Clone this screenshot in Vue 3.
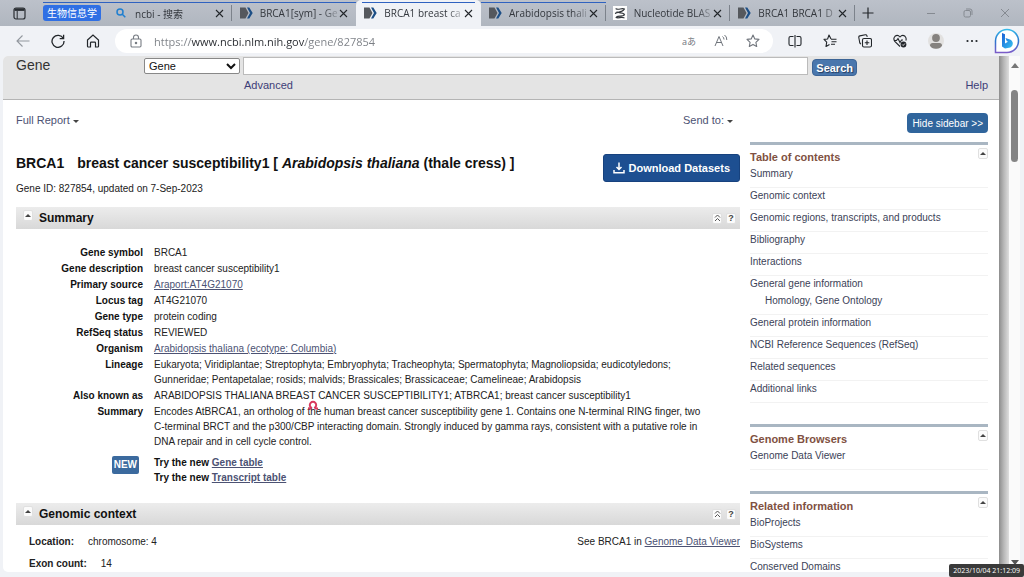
<script setup>
import { ref } from 'vue'

const address = ref('https://www.ncbi.nlm.nih.gov/gene/827854')

const tabs = [
  { title: 'ncbi - 搜索', icon: 'search', grouped: true, divider: true },
  { title: 'BRCA1[sym] - Ge', icon: 'ncbi', grouped: true, rounded: 'right' },
  { title: 'BRCA1 breast ca', icon: 'ncbi', grouped: true, active: true },
  { title: 'Arabidopsis thali', icon: 'ncbi', grouped: true, rounded: 'left', divider: true },
  { title: 'Nucleotide BLAS', icon: 'blast', divider: true },
  { title: 'BRCA1 BRCA1 D', icon: 'ncbi', divider: true },
]

const facts = [
  { term: 'Gene symbol', lines: ['BRCA1'] },
  { term: 'Gene description', lines: ['breast cancer susceptibility1'] },
  { term: 'Primary source', lines: ['Araport:AT4G21070'], link: true },
  { term: 'Locus tag', lines: ['AT4G21070'] },
  { term: 'Gene type', lines: ['protein coding'] },
  { term: 'RefSeq status', lines: ['REVIEWED'] },
  { term: 'Organism', lines: ['Arabidopsis thaliana (ecotype: Columbia)'], link: true },
  {
    term: 'Lineage',
    lines: [
      'Eukaryota; Viridiplantae; Streptophyta; Embryophyta; Tracheophyta; Spermatophyta; Magnoliopsida; eudicotyledons;',
      'Gunneridae; Pentapetalae; rosids; malvids; Brassicales; Brassicaceae; Camelineae; Arabidopsis',
    ],
  },
  { term: 'Also known as', lines: ['ARABIDOPSIS THALIANA BREAST CANCER SUSCEPTIBILITY1; ATBRCA1; breast cancer susceptibility1'] },
  {
    term: 'Summary',
    lines: [
      'Encodes AtBRCA1, an ortholog of the human breast cancer susceptibility gene 1. Contains one N-terminal RING finger, two',
      'C-terminal BRCT and the p300/CBP interacting domain. Strongly induced by gamma rays, consistent with a putative role in',
      'DNA repair and in cell cycle control.',
    ],
  },
]

const contents = [
  { label: 'Summary' },
  { label: 'Genomic context' },
  { label: 'Genomic regions, transcripts, and products' },
  { label: 'Bibliography' },
  { label: 'Interactions' },
  { label: 'General gene information', children: ['Homology', 'Gene Ontology'] },
  { label: 'General protein information' },
  { label: 'NCBI Reference Sequences (RefSeq)' },
  { label: 'Related sequences' },
  { label: 'Additional links' },
]

const portlets = [
  { title: 'Table of contents', items: contents },
  { title: 'Genome Browsers', items: [{ label: 'Genome Data Viewer' }] },
  { title: 'Related information', items: [{ label: 'BioProjects' }, { label: 'BioSystems' }, { label: 'Conserved Domains' }] },
]
</script>

<template>
  <div class="window">
    <header class="tabstrip">
      <button class="chrome-btn workspace" aria-label="Tab actions">
        <svg width="13" height="13" viewBox="0 0 13 13" fill="none" stroke="#2a2e33">
          <rect x="1" y="1" width="11" height="11" rx="2" stroke-width="1.2" />
          <path d="M1.5 2.6h10" stroke-width="2.6" />
          <path d="M4.2 4v8" stroke-width="1" />
        </svg>
      </button>
      <div class="group"><button class="group-chip">生物信息学</button></div>
      <nav class="tabs" aria-label="Tabs">
        <div
          v-for="tab in tabs"
          :key="tab.title"
          class="tab"
          :class="[tab.rounded, { grouped: tab.grouped, active: tab.active, divider: tab.divider }]"
        >
          <svg v-if="tab.icon === 'search'" class="favicon" width="14" height="14" viewBox="0 0 14 14" fill="none" stroke="#1f7fd0" stroke-width="1.5">
            <circle cx="6" cy="6" r="3" />
            <path d="M8.3 8.3l3 3" />
          </svg>
          <svg v-else-if="tab.icon === 'ncbi'" class="favicon" width="14" height="14" viewBox="0 0 14 14">
            <path d="M1 1.500h5.500l3 5.500l-3 5.500h-5.500z" fill="#55585d" />
            <path d="M8 1.500h2.300l3.400 5.500l-3.400 5.500h-2.300l3-5.500z" fill="#1d4f86" />
          </svg>
          <svg v-else class="favicon" width="14" height="14" viewBox="0 0 14 14" fill="none" stroke="#33373c" stroke-width="1.200" stroke-linecap="round">
            <rect width="14" height="14" fill="#fdfdfd" stroke="none" />
            <path d="M3 2.800c2.500 1.500 5.500-1 8.500 .2M11 3.500c-1.500 3-6.500 2.200-8.500 3.800M4 6c2.500 1.500 5 0 7 2M11.500 8.800c-2 2.200-6 .4-8 2.200M3 11.500c2.500 1 5-.8 8 .3" />
          </svg>
          <span class="tab-title">{{ tab.title }}</span>
          <button class="chrome-btn close" :aria-label="'Close ' + tab.title">
            <svg width="9" height="9" viewBox="0 0 9 9" stroke="#22262a" stroke-width="1.100"><path d="M1 1l7 7M8 1l-7 7" /></svg>
          </button>
        </div>
      </nav>
      <button class="chrome-btn plus" aria-label="New tab">
        <svg width="12" height="12" viewBox="0 0 12 12" stroke="#22262a" stroke-width="1.200"><path d="M6 .5v11M.5 6h11" /></svg>
      </button>
      <div class="window-controls">
        <button class="chrome-btn" aria-label="Minimize">
          <svg width="10" height="10" viewBox="0 0 10 10" stroke="#858a91"><path d="M1 5.500h8" /></svg>
        </button>
        <button class="chrome-btn" aria-label="Restore">
          <svg width="10" height="10" viewBox="0 0 10 10" fill="none" stroke="#858a91">
            <rect x="1" y="2.500" width="6.500" height="6.500" rx="1.500" /><path d="M3 1h4q2 0 2 2v4" />
          </svg>
        </button>
        <button class="chrome-btn" aria-label="Close window">
          <svg width="10" height="10" viewBox="0 0 10 10" stroke="#858a91"><path d="M1 1l8 8M9 1l-8 8" /></svg>
        </button>
      </div>
    </header>

    <div class="toolbar">
      <button class="chrome-btn tool" aria-label="Back">
        <svg width="14" height="14" viewBox="0 0 14 14" fill="none" stroke="#92979e" stroke-width="1.100"><path d="M13.500 7h-12.500M6.500 1.500L1 7l5.500 5.500" /></svg>
      </button>
      <button class="chrome-btn tool" aria-label="Refresh">
        <svg width="14" height="14" viewBox="0 0 14 14" fill="none" stroke="#22262a" stroke-width="1.300"><path d="M12.300 4.500A6 6 0 1 0 13 7M12.600 .8v3.900h-3.900" /></svg>
      </button>
      <button class="chrome-btn tool" aria-label="Home">
        <svg width="14" height="14" viewBox="0 0 14 14" fill="none" stroke="#22262a" stroke-width="1.200"><path d="M1.500 6L7 1l5.500 5v6.200q0 .8-.8.800h-2.200v-4q0-.8-.8-.8h-3.400q-.8 0-.8.800v4h-2.200q-.8 0-.8-.8z" /></svg>
      </button>
      <div class="address">
        <svg width="12" height="14" viewBox="0 0 12 14" fill="none" stroke="#777c83" stroke-width="1.100">
          <rect x="1" y="5" width="10" height="8" rx="1.200" /><path d="M3.500 5v-1.500a2.500 2.500 0 0 1 5 0v1.500" /><circle cx="6" cy="9" r=".7" fill="#777c83" />
        </svg>
        <input v-model="address" class="url" type="text" aria-label="Address" />
        <button class="chrome-btn translate" aria-label="Translate">aあ</button>
        <button class="chrome-btn" aria-label="Read aloud">
          <svg width="14" height="14" viewBox="0 0 14 14" fill="none" stroke="#70757c" stroke-width="1">
            <path d="M1 12L5 2.500l4 9.500M2.500 8.500h5M8.500 2.500q1.500 1 1.500 3M10.500 1q2.500 1.600 2.300 5" />
          </svg>
        </button>
        <button class="chrome-btn" aria-label="Add to favorites">
          <svg width="14" height="14" viewBox="0 0 14 14" fill="none" stroke="#70757c" stroke-width="1.100" stroke-linejoin="round"><path d="M7 1l1.800 3.900 4.200.5-3.100 2.900.8 4.200L7 10.400l-3.700 2.100.8-4.200L1 5.400l4.200-.5z" /></svg>
        </button>
      </div>
      <div class="tools">
        <button class="chrome-btn" aria-label="Split screen">
          <svg width="14" height="14" viewBox="0 0 14 14" fill="none" stroke="#22262a" stroke-width="1.100"><path d="M5.500 2.500h-3q-1.500 0-1.500 1.500v6q0 1.500 1.500 1.500h3M8.500 2.500h3q1.500 0 1.500 1.500v6q0 1.500-1.500 1.500h-3M7 1v12.500" /></svg>
        </button>
        <button class="chrome-btn" aria-label="Favorites">
          <svg width="14" height="14" viewBox="0 0 14 14" fill="none" stroke="#22262a" stroke-width="1.100" stroke-linejoin="round"><path d="M8 5L6 1 4.600 5 1 5.400 3.700 8.200 3 12.500 6.500 10.500M8 5.200h5.500M8.500 7.700h5M8 10.200h4" /></svg>
        </button>
        <button class="chrome-btn" aria-label="Collections">
          <svg width="14" height="14" viewBox="0 0 14 14" fill="none" stroke="#22262a" stroke-width="1.100">
            <rect x="4.500" y="4.500" width="9" height="8.500" rx="1.500" /><path d="M9 6.500v4.500M6.800 8.700h4.500M3 10q-1-.3-1.300-1.500L.8 3.500q-.2-1.300 1-1.600l5.500-1.100q1.300-.2 1.700 1l.2 1" />
          </svg>
        </button>
        <button class="chrome-btn" aria-label="Browser essentials">
          <svg width="14" height="14" viewBox="0 0 14 14" fill="none" stroke="#22262a" stroke-width="1.100">
            <path d="M7 12.500L1.800 7.400Q-.2 4.500 2 2.300q2.700-2 5 .7q2.300-2.700 5-.7q1.800 1.900 .8 4.200M1.500 6.500h2l1.500-2 2 4 1.500-2.500h1.500" />
            <circle cx="10.500" cy="10.500" r="2.900" fill="#22262a" stroke="none" /><path d="M9.200 10.500l1 1 1.700-2" stroke="#fff" stroke-width=".8" />
          </svg>
        </button>
        <button class="chrome-btn" aria-label="Profile">
          <svg width="16" height="16" viewBox="0 0 16 16"><circle cx="8" cy="8" r="8" fill="#e2e1e0" /><circle cx="8" cy="5" r="3.900" fill="#85827f" /><path d="M2 12.500q0-2.500 2.500-2.500h7q2.500 0 2.500 2.500-1.500 3.300-6 3.300t-6-3.300z" fill="#85827f" /></svg>
        </button>
        <button class="chrome-btn" aria-label="Settings and more">
          <svg width="14" height="14" viewBox="0 0 14 14" fill="#22262a"><circle cx="2.500" cy="7" r="1.100" /><circle cx="7" cy="7" r="1.100" /><circle cx="11.500" cy="7" r="1.100" /></svg>
        </button>
      </div>
      <button class="chrome-btn bing" aria-label="Bing chat">
        <svg width="26" height="26" viewBox="0 0 26 26">
          <defs>
            <linearGradient id="bubble" x1="0" y1="0" x2="0" y2="1"><stop offset="0" stop-color="#35b9e9" /><stop offset=".5" stop-color="#2b76cf" /><stop offset="1" stop-color="#7a5cc8" /></linearGradient>
            <linearGradient id="bing" x1="0" y1="0" x2="1" y2="1"><stop offset="0" stop-color="#1b5fd6" /><stop offset="1" stop-color="#36c3f0" /></linearGradient>
          </defs>
          <path d="M1.500 24.500v-11.500a11.500 11.500 0 1 1 11.500 11.500z" fill="#fff" stroke="url(#bubble)" stroke-width="1.500" />
          <path d="M8 5l3 1.200v9.300l3-1.800-1.300-.8-1.200-3 4.500 1.500q3 1.500 2.800 4.500-.3 2.600-2.500 3.600L11 20.500l-3-2z" fill="url(#bing)" />
        </svg>
      </button>
    </div>

    <div class="viewport">
      <div class="page">
        <form class="searchbar" @submit.prevent>
          <h1 class="site">Gene</h1>
          <select class="database" aria-label="Database"><option>Gene</option></select>
          <div class="query">
            <input type="text" aria-label="Search term" />
            <a href="#advanced">Advanced</a>
          </div>
          <button class="search-btn">Search</button>
          <a class="help" href="#help">Help</a>
        </form>

        <div class="columns">
          <main class="main">
            <div class="display-bar">
              <a href="#report">Full Report<i class="caret"></i></a>
              <a href="#send">Send to:<i class="caret"></i></a>
            </div>
            <div class="title-row">
              <div>
                <h2 class="gene-title"><span>BRCA1</span>breast cancer susceptibility1 [ <em>Arabidopsis thaliana</em> (thale cress) ]</h2>
                <p class="gene-id">Gene ID: 827854, updated on 7-Sep-2023</p>
              </div>
              <button class="download">
                <svg width="12" height="12" viewBox="0 0 12 12" fill="none" stroke="#fff" stroke-width="1.500"><path d="M6 .5v7M3.500 5L6 7.500 8.500 5M1 8v2.800h10v-2.800" /></svg>
                Download Datasets
              </button>
            </div>

            <section>
              <div class="section-head">
                <button class="mini" aria-label="Collapse Summary"><i class="up"></i></button>
                <h3>Summary</h3>
                <button class="mini" aria-label="Go to top">
                  <svg width="7" height="8" viewBox="0 0 7 8" fill="none" stroke="#555"><path d="M1 3.500L3.500 1 6 3.500M1 7L3.500 4.500 6 7" /></svg>
                </button>
                <button class="mini" aria-label="Summary help">?</button>
              </div>
              <dl class="facts">
                <template v-for="fact in facts" :key="fact.term">
                  <dt>{{ fact.term }}</dt>
                  <dd>
                    <a v-if="fact.link" href="#source">{{ fact.lines[0] }}</a>
                    <template v-else><span v-for="line in fact.lines" :key="line" class="line">{{ line }}</span></template>
                  </dd>
                </template>
                <dt class="new"><span>NEW</span></dt>
                <dd class="try">
                  <span class="line">Try the new <a href="#gene-table">Gene table</a></span>
                  <span class="line">Try the new <a href="#transcript-table">Transcript table</a></span>
                </dd>
              </dl>
            </section>

            <section>
              <div class="section-head">
                <button class="mini" aria-label="Collapse Genomic context"><i class="up"></i></button>
                <h3>Genomic context</h3>
                <button class="mini" aria-label="Go to top">
                  <svg width="7" height="8" viewBox="0 0 7 8" fill="none" stroke="#555"><path d="M1 3.500L3.500 1 6 3.500M1 7L3.500 4.500 6 7" /></svg>
                </button>
                <button class="mini" aria-label="Genomic context help">?</button>
              </div>
              <div class="context">
                <p><b>Location:</b>chromosome: 4<span class="see">See BRCA1 in <a href="#viewer">Genome Data Viewer</a></span></p>
                <p><b>Exon count:</b>14</p>
              </div>
            </section>
          </main>

          <aside class="sidebar">
            <button class="hide-btn">Hide sidebar &gt;&gt;</button>
            <section v-for="portlet in portlets" :key="portlet.title" class="portlet">
              <div class="portlet-head">
                <h3>{{ portlet.title }}</h3>
                <button class="mini" :aria-label="'Collapse ' + portlet.title"><i class="up"></i></button>
              </div>
              <ul>
                <li v-for="item in portlet.items" :key="item.label">
                  <a href="#item">{{ item.label }}</a>
                  <div v-if="item.children" class="children">
                    <a v-for="(child, i) in item.children" :key="child" href="#item">{{ child }}{{ i === 0 ? ',' : '' }}</a>
                  </div>
                </li>
              </ul>
            </section>
          </aside>
        </div>
      </div>
      <div class="page-shadow"></div>
      <div class="scrollbar">
        <i class="up"></i>
        <div class="thumb"></div>
        <i class="down"></i>
      </div>
      <svg class="pointer" width="10" height="10" viewBox="0 0 10 10" fill="none" stroke="#d93a5e" stroke-width="2"><path d="M0 8.500h2.500l.5-1A3.200 3.200 0 1 1 7 7.500l.5 1h2.500" /></svg>
      <time class="stamp">2023/10/04 21:12:09</time>
    </div>
  </div>
</template>

<style>
html,
body {
  margin: 0;
  height: 100%;
}
</style>

<style scoped>
* {
  box-sizing: border-box;
}
.window {
  display: flex;
  flex-direction: column;
  height: 100vh;
  overflow: hidden;
  background: #f0f2f6;
  color: #222;
  font-family: "Liberation Sans", Arial, "Noto Sans CJK SC", sans-serif;
  font-size: 11px;
}
h1, h2, h3, p, ul, dl, dd {
  margin: 0;
  padding: 0;
}
button {
  font-family: inherit;
  cursor: pointer;
}
a {
  color: #4c5273;
}
.chrome-btn {
  display: flex;
  align-items: center;
  justify-content: center;
  padding: 0;
  border: 0;
  background: none;
}
svg {
  display: block;
  flex: none;
}

.tabstrip {
  display: flex;
  height: 26px;
  flex: none;
  background: linear-gradient(#bcc1ca, #b0b6bf);
  font-family: "Open Sans", "Noto Sans CJK SC", sans-serif;
}
.workspace {
  width: 39px;
  margin-right: 4px;
}
.group {
  flex: none;
  width: 64px;
  padding-top: 5px;
  background: linear-gradient(#2f62c0, #2f62c0) 0 2px / 100% 1px no-repeat;
}
.group-chip {
  display: block;
  height: 16px;
  padding: 0 4px;
  border: 0;
  border-radius: 3px;
  background: #2f6fe4;
  color: #fff;
  font-size: 10px;
  line-height: 16px;
}
.tabs {
  display: flex;
  flex: 0 1 748px;
  min-width: 0;
}
.tab {
  position: relative;
  display: flex;
  flex: 1 1 0;
  min-width: 0;
  align-items: center;
  padding: 0 7px;
}
.favicon {
  margin-right: 7px;
}
.tab.grouped::before {
  content: "";
  position: absolute;
  inset: 2px 0 auto 0;
  height: 1px;
  background: #2f62c0;
}
.tab.divider::after {
  content: "";
  position: absolute;
  inset: 5px 0 5px auto;
  width: 1px;
  background: #7c828b;
}
.tab.right {
  border-radius: 0 0 4px 0;
}
.tab.left {
  border-radius: 0 0 0 4px;
}
.tab.active {
  background: #f0f2f6;
  border-radius: 5px 5px 0 0;
}
.tab.active::before {
  inset: 2px 6px auto 6px;
}
.tab-title {
  flex: 1;
  min-width: 0;
  overflow: hidden;
  white-space: nowrap;
  color: #33373d;
  font-size: 10px;
  mask-image: linear-gradient(90deg, #000 80%, transparent 105%);
}
.close {
  width: 11px;
}
.plus {
  width: 26px;
}
.window-controls {
  display: flex;
  flex: none;
  gap: 27px;
  margin-left: auto;
  padding-right: 14px;
}

.toolbar {
  display: flex;
  height: 30px;
  flex: none;
  align-items: center;
  padding-right: 4px;
  padding-left: 5px;
  font-family: "Open Sans", "Noto Sans CJK SC", sans-serif;
}
.tool {
  width: 35px;
}
.address {
  display: flex;
  flex: 1;
  height: 24px;
  align-items: center;
  gap: 18px;
  margin-left: 5px;
  padding: 0 13px 0 15px;
  border-radius: 12px;
  background: #fff;
}
.url {
  flex: 1;
  min-width: 0;
  margin-left: -6px;
  padding: 0;
  border: 0;
  outline: 0;
  background: linear-gradient(90deg, #7b7f85 37px, #26292e 37px 151px, #7b7f85 151px);
  background-clip: text;
  color: transparent;
  caret-color: #26292e;
  font-family: inherit;
  font-size: 11px;
}
.translate {
  color: #70757c;
  font-size: 9px;
}
.tools {
  display: flex;
  align-items: center;
  gap: 21px;
  margin: 0 15px;
}

.viewport {
  position: relative;
  display: flex;
  flex: 1;
  min-height: 0;
  margin: 0 4px 5px 3px;
}
.page {
  flex: 1;
  min-width: 0;
  overflow: hidden;
  border-radius: 5px 0 0 5px;
  background: #fff;
}
.page-shadow {
  width: 10px;
  background: linear-gradient(90deg, #8d8d8d, #b5b5b5 45%, #dedede);
}
.scrollbar {
  display: flex;
  flex-direction: column;
  align-items: center;
  width: 11px;
  padding: 7px 0;
  background: #fafafa;
}
.thumb {
  width: 7px;
  height: 72px;
  margin: 22px 0 auto;
  border-radius: 4px;
  background: #858585;
}
.up {
  display: block;
  border: 3px solid transparent;
  border-top: 0;
  border-bottom: 3px solid #444;
}
.down {
  display: block;
  border: 4px solid transparent;
  border-top: 5px solid #555;
  border-bottom: 0;
}
.scrollbar .up {
  border-width: 0 4px 5px;
  border-bottom-color: #777;
}

.searchbar {
  display: flex;
  align-items: flex-start;
  height: 44px;
  padding: 1px 11px 0 13px;
  border-bottom: 1px solid #b4b4b4;
  background: #e4e4e4;
}
.searchbar a {
  color: #3d3d78;
  text-decoration: none;
}
.site {
  width: 128px;
  color: #333;
  font-size: 14px;
  font-weight: 400;
  line-height: 16px;
}
.database {
  width: 96px;
  height: 16px;
  margin-top: 1px;
  padding: 0;
  border: 1px solid #888;
  border-radius: 2px;
  background: #fff;
  color: #111;
  font-family: inherit;
  font-size: 11px;
}
.query {
  flex: 1;
  margin: 0 4px 0 3px;
}
.query input {
  display: block;
  width: 100%;
  height: 18px;
  margin-bottom: 4px;
  border: 1px solid #bbb;
  background: #fff;
  font-size: 11px;
}
.query a {
  display: block;
  margin-left: 1px;
}
.search-btn {
  height: 17px;
  margin-top: 2px;
  padding: 0 3px;
  border: 1px solid #3c6496;
  border-radius: 4px;
  background: #4a77ad;
  color: #fff;
  font-size: 11px;
  font-weight: 700;
  line-height: 14px;
  text-shadow: 1px 1px 1px #223a5c;
}
.help {
  width: 131px;
  margin-top: 22px;
  text-align: right;
}

.columns {
  display: flex;
  gap: 10px;
  padding: 0 11px 0 13px;
}
.main {
  flex: 1;
  min-width: 0;
}
.display-bar {
  display: flex;
  justify-content: space-between;
  padding: 13px 7px 0 0;
  line-height: 14px;
}
.display-bar a {
  text-decoration: none;
}
.caret {
  display: inline-block;
  margin-left: 3px;
  border: 3px solid transparent;
  border-top-color: #444;
  border-bottom: 0;
  vertical-align: 1px;
}
.title-row {
  display: flex;
  justify-content: space-between;
  margin-top: 27px;
}
.gene-title {
  color: #111;
  font-size: 14px;
  line-height: 18px;
  white-space: nowrap;
}
.gene-title span {
  margin-right: 13px;
}
.gene-id {
  margin-top: 10px;
  font-size: 10px;
  line-height: 14px;
}
.download {
  display: flex;
  align-items: center;
  gap: 4px;
  height: 28px;
  padding: 0 9px;
  border: 1px solid #17427e;
  border-radius: 3px;
  background: #1d4f91;
  color: #fff;
  font-size: 11px;
  font-weight: 700;
}
.section-head {
  display: flex;
  align-items: center;
  gap: 4px;
  height: 22px;
  margin-top: 11px;
  padding: 0 4px 0 7px;
  background: linear-gradient(#ececec, #d8d8d8);
}
.section-head h3 {
  flex: 1;
  margin-left: 2px;
  color: #111;
  font-size: 12px;
}
.mini {
  display: flex;
  align-items: center;
  justify-content: center;
  width: 10px;
  height: 11px;
  padding: 0;
  border: 1px solid #e0e0e0;
  border-radius: 2px;
  background: #fbfbfb;
  color: #444;
  font-size: 9px;
  font-weight: 700;
}
.section-head .mini:first-child {
  margin-bottom: 5px;
}
.facts {
  display: grid;
  grid-template-columns: 127px 1fr;
  gap: 1px 11px;
  padding-top: 16px;
  padding-bottom: 7px;
  font-size: 10px;
  line-height: 15px;
}
.facts dt {
  color: #111;
  font-weight: 700;
  text-align: right;
}
.line {
  display: block;
  white-space: nowrap;
}
.facts .new {
  padding: 6px 4px 0 0;
}
.new span {
  display: inline-block;
  height: 18px;
  padding: 0 2px;
  border-radius: 2px;
  background: #3b6a9e;
  color: #fff;
  line-height: 18px;
}
.try {
  padding-top: 5px;
  color: #111;
  font-weight: 700;
}
.context {
  padding: 10px 0 0 13px;
  font-size: 10px;
  line-height: 14px;
}
.context p {
  display: flex;
  gap: 14px;
  margin-bottom: 8px;
}
.see {
  margin-left: auto;
}

.sidebar {
  flex: none;
  width: 238px;
  padding-top: 13px;
}
.hide-btn {
  display: block;
  height: 20px;
  margin: 0 0 9px auto;
  padding: 0 5px;
  border: 0;
  border-radius: 4px;
  background: #30659c;
  color: #fff;
  font-size: 10px;
}
.portlet {
  margin-bottom: 21px;
  border-top: 3px solid #a9b6c2;
}
.portlet-head {
  display: flex;
  justify-content: space-between;
  padding: 3px 0 1px;
}
.portlet-head h3 {
  padding-top: 1px;
  color: #7f5142;
  font-size: 11px;
  line-height: 16px;
}
.portlet ul {
  list-style: none;
}
.portlet li {
  padding: 1px 0 6px;
  border-bottom: 1px solid #f2f2f2;
  font-size: 10px;
  line-height: 14px;
}
.portlet li a {
  color: #3b4257;
  text-decoration: none;
}
.children {
  display: flex;
  gap: 3px;
  padding: 3px 0 0 15px;
}

.pointer {
  position: absolute;
  top: 344px;
  left: 305px;
}
.stamp {
  position: absolute;
  right: -4px;
  bottom: -5px;
  padding: 0 4px;
  border-radius: 2px;
  background: #3a3a3a;
  color: #fff;
  font: 7px/13px "Open Sans", sans-serif;
}
</style>
